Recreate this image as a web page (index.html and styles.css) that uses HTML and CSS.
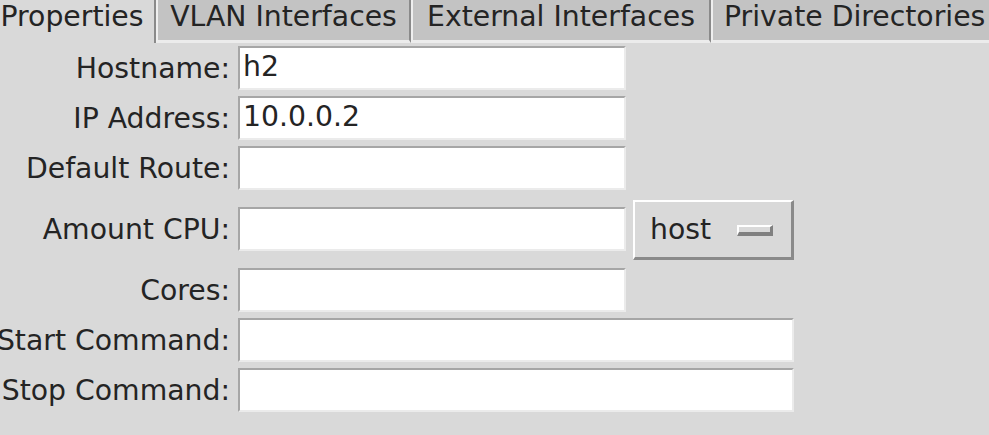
FILE: index.html
```html
<!DOCTYPE html>
<html>
<head>
<meta charset="utf-8">
<link rel="stylesheet" href="styles.css">
</head>
<body>
<div class="notebook">
  <div class="tabs">
    <div class="tab active w-props">Properties</div>
    <div class="tab w-vlan">VLAN Interfaces</div>
    <div class="tab w-ext">External Interfaces</div>
    <div class="tab w-priv">Private Directories</div>
  </div>
  <div class="form">
    <div class="label">Hostname:</div>
    <div class="entry">h2</div>

    <div class="label">IP Address:</div>
    <div class="entry">10.0.0.2</div>

    <div class="label">Default Route:</div>
    <div class="entry"></div>

    <div class="label">Amount CPU:</div>
    <div class="entry"></div>
    <div class="menubutton"><span class="mb-text">host</span><span class="indicator"></span></div>

    <div class="label">Cores:</div>
    <div class="entry"></div>

    <div class="label">Start Command:</div>
    <div class="entry wide"></div>

    <div class="label">Stop Command:</div>
    <div class="entry wide"></div>
  </div>
</div>
</body>
</html>
```

FILE: styles.css
```css
html, body {
  margin: 0;
  padding: 0;
  overflow: hidden;
}
body {
  width: 989px;
  height: 435px;
  background: #d9d9d9;
  font-family: "DejaVu Sans", sans-serif;
  font-size: 28.3px;
  color: #242424;
}
.tabs {
  display: flex;
  margin-left: -10px;
  height: 43px;
  white-space: nowrap;
}
.tab {
  flex: none;
  box-sizing: border-box;
  height: 43px;
  line-height: 34px;
  text-align: center;
  background: #c3c3c3;
  border-left: 2px solid #efefef;
  border-right: 2px solid #8a8a8a;
  border-bottom: 3px solid #ececec;
}
.tab.active {
  background: #d9d9d9;
  border-left: none;
  border-bottom: none;
}
.w-props { width: 166px; }
.w-vlan { width: 255px; }
.w-ext { width: 300px; }
.w-priv { width: 300px; text-align: left; padding-left: 11px; }

.form {
  display: grid;
  grid-template-columns: 230px 388px 160px;
  column-gap: 8px;
  row-gap: 6px;
  padding-top: 3px;
  align-items: center;
}
.label {
  grid-column: 1;
  display: flex;
  justify-content: flex-end;
  white-space: nowrap;
  min-width: 0;
}
.entry {
  grid-column: 2;
  box-sizing: border-box;
  height: 44px;
  background: #ffffff;
  border-top: 2px solid #a6a6a6;
  border-left: 2px solid #a6a6a6;
  border-bottom: 2px solid #ebebeb;
  border-right: 2px solid #ebebeb;
  padding-left: 3px;
  line-height: 38px;
  white-space: nowrap;
  overflow: hidden;
}
.entry.wide {
  grid-column: 2 / 4;
}
.menubutton {
  grid-column: 3;
  box-sizing: border-box;
  height: 60px;
  margin: 4px 0 2px -1px;
  display: flex;
  align-items: center;
  justify-content: space-between;
  padding: 0 18px 0 15px;
  background: #d9d9d9;
  border-top: 2px solid #ffffff;
  border-left: 2px solid #ffffff;
  border-right: 3px solid #8a8a8a;
  border-bottom: 3px solid #8a8a8a;
}
.indicator {
  box-sizing: border-box;
  width: 36px;
  height: 11px;
  margin-top: 1px;
  background: #d9d9d9;
  border-top: 2px solid #ffffff;
  border-left: 2px solid #ffffff;
  border-right: 3px solid #808080;
  border-bottom: 4px solid #808080;
}
```
